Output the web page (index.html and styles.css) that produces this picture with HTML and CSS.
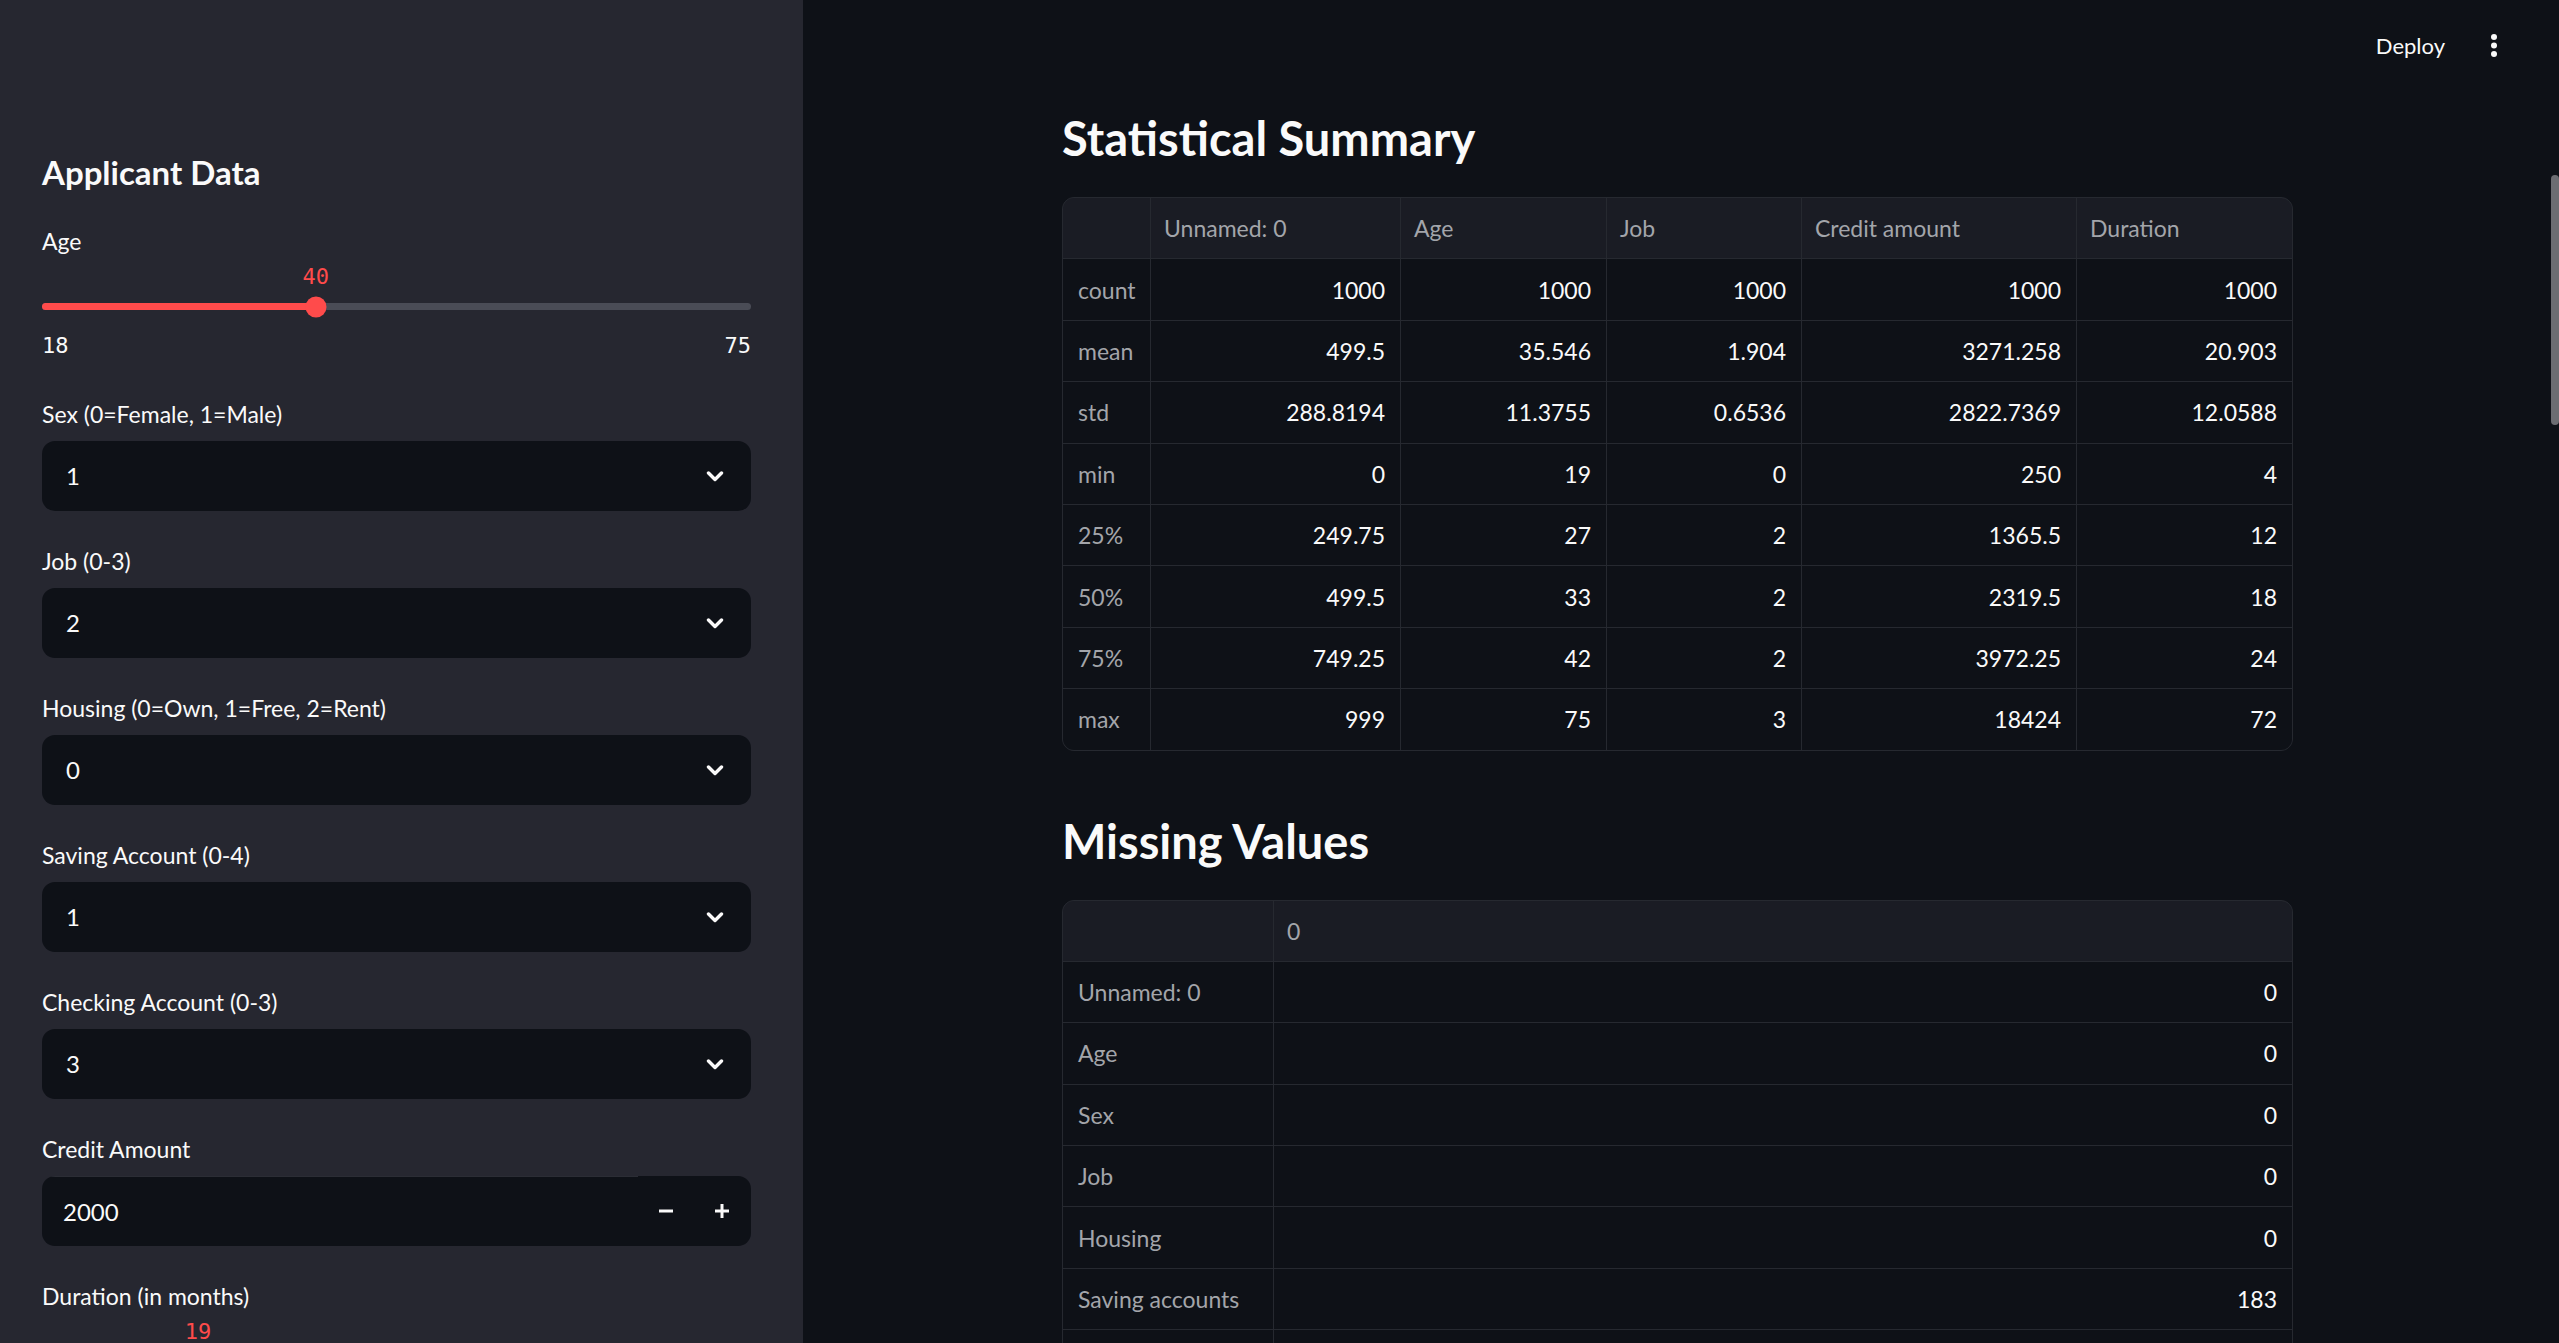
FILE: index.html
```html
<!DOCTYPE html>
<html lang="en">
<head>
<meta charset="utf-8">
<title>Credit Risk App</title>
<link rel="stylesheet" href="styles.css">
</head>
<body>
<aside class="sidebar">
  <h2 class="side-title">Applicant Data</h2>

  <div class="widget">
    <div class="label">Age</div>
    <div class="slider">
      <div class="slider-value-row"><span class="slider-value" style="left:38.6%">40</span></div>
      <div class="track"><div class="fill" style="width:38.6%"></div><div class="thumb" style="left:38.6%"></div></div>
      <div class="ticks"><span>18</span><span>75</span></div>
    </div>
  </div>

  <div class="widget">
    <div class="label">Sex (0=Female, 1=Male)</div>
    <div class="select"><span class="select-value">1</span><svg class="chev" width="18" height="11" viewBox="0 0 18 11"><polyline points="2.5,2 9,8.5 15.5,2"/></svg></div>
  </div>

  <div class="widget">
    <div class="label">Job (0-3)</div>
    <div class="select"><span class="select-value">2</span><svg class="chev" width="18" height="11" viewBox="0 0 18 11"><polyline points="2.5,2 9,8.5 15.5,2"/></svg></div>
  </div>

  <div class="widget">
    <div class="label">Housing (0=Own, 1=Free, 2=Rent)</div>
    <div class="select"><span class="select-value">0</span><svg class="chev" width="18" height="11" viewBox="0 0 18 11"><polyline points="2.5,2 9,8.5 15.5,2"/></svg></div>
  </div>

  <div class="widget">
    <div class="label">Saving Account (0-4)</div>
    <div class="select"><span class="select-value">1</span><svg class="chev" width="18" height="11" viewBox="0 0 18 11"><polyline points="2.5,2 9,8.5 15.5,2"/></svg></div>
  </div>

  <div class="widget">
    <div class="label">Checking Account (0-3)</div>
    <div class="select"><span class="select-value">3</span><svg class="chev" width="18" height="11" viewBox="0 0 18 11"><polyline points="2.5,2 9,8.5 15.5,2"/></svg></div>
  </div>

  <div class="widget">
    <div class="label">Credit Amount</div>
    <div class="number-input">
      <div class="number-field">2000</div>
      <div class="step-btn"><svg width="14" height="14" viewBox="0 0 14 14"><rect x="0" y="5.5" width="14" height="3"/></svg></div>
      <div class="step-btn"><svg width="14" height="14" viewBox="0 0 14 14"><rect x="0" y="5.5" width="14" height="3"/><rect x="5.5" y="0" width="3" height="14"/></svg></div>
    </div>
  </div>

  <div class="widget">
    <div class="label">Duration (in months)</div>
    <div class="slider">
      <div class="slider-value-row"><span class="slider-value" style="left:22%">19</span></div>
      <div class="track"><div class="fill" style="width:22%"></div><div class="thumb" style="left:22%"></div></div>
    </div>
  </div>
</aside>

<main class="main">
  <header class="topbar">
    <span class="deploy">Deploy</span>
    <svg class="kebab" width="8" height="26" viewBox="0 0 8 26"><circle cx="4" cy="4" r="3"/><circle cx="4" cy="12.5" r="3"/><circle cx="4" cy="21" r="3"/></svg>
  </header>

  <section class="content">
    <h2 class="title">Statistical Summary</h2>
    <div class="grid grid-stats">
      <div class="hd"></div><div class="hd">Unnamed: 0</div><div class="hd">Age</div><div class="hd">Job</div><div class="hd">Credit amount</div><div class="hd">Duration</div>

      <div class="ix">count</div><div class="num">1000</div><div class="num">1000</div><div class="num">1000</div><div class="num">1000</div><div class="num">1000</div>
      <div class="ix">mean</div><div class="num">499.5</div><div class="num">35.546</div><div class="num">1.904</div><div class="num">3271.258</div><div class="num">20.903</div>
      <div class="ix">std</div><div class="num">288.8194</div><div class="num">11.3755</div><div class="num">0.6536</div><div class="num">2822.7369</div><div class="num">12.0588</div>
      <div class="ix">min</div><div class="num">0</div><div class="num">19</div><div class="num">0</div><div class="num">250</div><div class="num">4</div>
      <div class="ix">25%</div><div class="num">249.75</div><div class="num">27</div><div class="num">2</div><div class="num">1365.5</div><div class="num">12</div>
      <div class="ix">50%</div><div class="num">499.5</div><div class="num">33</div><div class="num">2</div><div class="num">2319.5</div><div class="num">18</div>
      <div class="ix">75%</div><div class="num">749.25</div><div class="num">42</div><div class="num">2</div><div class="num">3972.25</div><div class="num">24</div>
      <div class="ix">max</div><div class="num">999</div><div class="num">75</div><div class="num">3</div><div class="num">18424</div><div class="num">72</div>
    </div>

    <h2 class="title title-second">Missing Values</h2>
    <div class="grid grid-missing">
      <div class="hd"></div><div class="hd">0</div>
      <div class="ix">Unnamed: 0</div><div class="num">0</div>
      <div class="ix">Age</div><div class="num">0</div>
      <div class="ix">Sex</div><div class="num">0</div>
      <div class="ix">Job</div><div class="num">0</div>
      <div class="ix">Housing</div><div class="num">0</div>
      <div class="ix">Saving accounts</div><div class="num">183</div>
      <div class="ix"></div><div class="num"></div>
    </div>
  </section>

  <div class="scroll-thumb"></div>
</main>
</body>
</html>
```

FILE: styles.css
```css
* { box-sizing: border-box; }

html, body {
  margin: 0;
  padding: 0;
  width: 2559px;
  height: 1343px;
  overflow: hidden;
}

body {
  display: flex;
  background: #0e1117;
  color: #fafafa;
  font-family: Lato, "Noto Sans", sans-serif;
}

/* ---------- sidebar ---------- */
.sidebar {
  flex: 0 0 803px;
  height: 1343px;
  overflow: hidden;
  background: #262730;
  padding: 153px 52px 0 42px;
  display: flex;
  flex-direction: column;
  gap: 37px;
}

.side-title {
  margin: 0;
  font-size: 33px;
  line-height: 38px;
  font-weight: 700;
}

.widget {
  display: flex;
  flex-direction: column;
  flex-shrink: 0;
}

.label {
  font-size: 23px;
  line-height: 26px;
  height: 26px;
  white-space: nowrap;
}

.select,
.number-input {
  margin-top: 14px;
  height: 70px;
  background: #0e1117;
  border-radius: 13px;
  display: flex;
  align-items: center;
}

.select {
  justify-content: space-between;
  padding: 0 27px 0 24px;
}

.select-value {
  font-size: 24px;
  line-height: 28px;
}

.chev polyline {
  fill: none;
  stroke: #fafafa;
  stroke-width: 3.4;
  stroke-linecap: round;
  stroke-linejoin: round;
}

.number-input {
  overflow: hidden;
}

.number-field {
  flex: 1;
  height: 100%;
  display: flex;
  align-items: center;
  padding-left: 21px;
  font-size: 24px;
  border-top: 1px solid #2b2d35;
}

.step-btn {
  flex: 0 0 56px;
  height: 100%;
  display: flex;
  align-items: center;
  justify-content: center;
}

.step-btn:last-child { margin-right: 1px; }

.step-btn svg { fill: #fafafa; }

/* slider */
.slider {
  display: flex;
  flex-direction: column;
}

.slider-value-row {
  position: relative;
  margin-top: 11px;
  height: 26px;
}

.slider-value {
  position: absolute;
  top: 0;
  transform: translateX(-50%);
  font-family: "DejaVu Sans Mono", "Liberation Mono", monospace;
  font-size: 22px;
  line-height: 24px;
  color: #ff4b4b;
}

.track {
  position: relative;
  margin-top: 12px;
  height: 7px;
  border-radius: 4px;
  background: #4a4c56;
}

.fill {
  height: 100%;
  border-radius: 4px;
  background: #ff4b4b;
}

.thumb {
  position: absolute;
  top: 50%;
  width: 21px;
  height: 21px;
  border-radius: 50%;
  background: #ff4b4b;
  transform: translate(-50%, -50%);
}

.ticks {
  margin-top: 23px;
  height: 31px;
  display: flex;
  justify-content: space-between;
  font-family: "DejaVu Sans Mono", "Liberation Mono", monospace;
  font-size: 22px;
  line-height: 26px;
  color: #fafafa;
}

/* ---------- main ---------- */
.main {
  flex: 1;
  position: relative;
  height: 1343px;
  overflow: hidden;
}

.topbar {
  height: 92px;
  display: flex;
  align-items: center;
  justify-content: flex-end;
  padding-right: 61px;
  gap: 45px;
}

.deploy {
  font-size: 22px;
  line-height: 26px;
  color: #fafafa;
}

.kebab { fill: #fafafa; display: block; }

.content {
  padding: 18px 0 0 259px;
  width: 1490px;
}

.title {
  margin: 0 0 31px 0;
  font-size: 47px;
  line-height: 56px;
  font-weight: 700;
  color: #fafafa;
  white-space: nowrap;
}

.title-second {
  margin-top: 62px;
}

.grid {
  display: grid;
  width: 1231px;
  grid-auto-rows: 60.4px;
  gap: 1px;
  background: #262930;
  border: 1px solid #262930;
  border-radius: 12px;
  overflow: hidden;
  font-size: 23px;
}

.grid-stats {
  grid-template-columns: 87px 249px 205px 194px 274px 215px;
}

.grid-missing {
  grid-template-columns: 210px 1018px;
}

.grid > div {
  display: flex;
  align-items: center;
  padding: 0 15px;
  background: #0e1117;
  white-space: nowrap;
}

.grid > .hd {
  background: #1a1c24;
  color: #a3a5aa;
  padding-left: 13px;
}

.grid > .ix {
  color: #a3a5aa;
}

.grid > .num {
  justify-content: flex-end;
  color: #fafafa;
}

.scroll-thumb {
  position: absolute;
  top: 175px;
  right: 0;
  width: 8px;
  height: 250px;
  border-radius: 4px;
  background: #6c6d72;
}
```
